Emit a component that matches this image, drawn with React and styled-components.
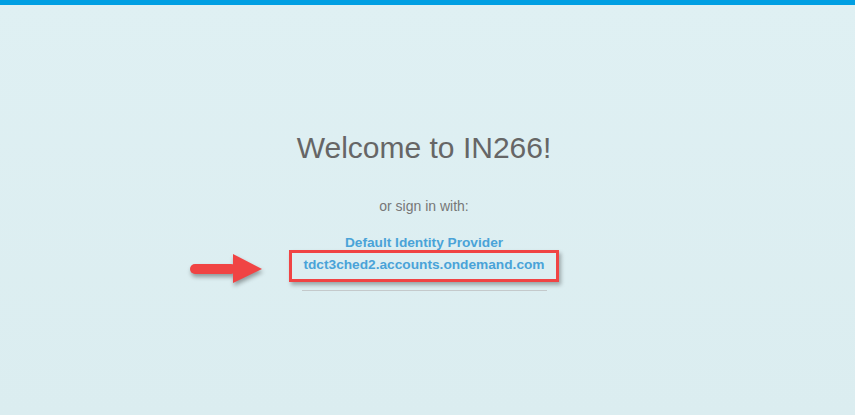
import React from "react";
import styled, { createGlobalStyle } from "styled-components";

const GlobalStyle = createGlobalStyle`
  html, body {
    margin: 0;
    padding: 0;
  }
  body {
    font-family: "Liberation Sans", Arial, sans-serif;
  }
`;

const Page = styled.div`
  min-height: 100vh;
  background: linear-gradient(to bottom, #dff0f3 0%, #dbedf0 100%);
  display: flex;
  flex-direction: column;
`;

const TopBar = styled.div`
  height: 5px;
  background-color: #009fe3;
`;

const Main = styled.main`
  display: flex;
  flex-direction: column;
  align-items: center;
  padding: 128px 7px 0 0;
`;

const Title = styled.h1`
  margin: 0;
  font-size: 30px;
  line-height: 30px;
  font-weight: normal;
  color: #666;
`;

const Subtitle = styled.p`
  margin: 36px 0 0;
  font-size: 14px;
  line-height: 14px;
  color: #777;
`;

const ProviderList = styled.ul`
  list-style: none;
  margin: 23px 0 0;
  padding: 0;
  display: flex;
  flex-direction: column;
  align-items: center;
  gap: 8px;
`;

const ProviderItem = styled.li`
  position: relative;
`;

const ProviderLink = styled.a`
  display: block;
  font-size: 13.7px;
  line-height: 14px;
  font-weight: bold;
  color: #4aa3d8;
  text-decoration: none;
  cursor: pointer;
`;

// red annotation frame drawn over the highlighted provider
const Highlight = styled.span`
  position: absolute;
  left: -14px;
  right: -14px;
  top: -8px;
  bottom: -10px;
  border: 3px solid #f04444;
  box-shadow: 2px 3px 4px rgba(0, 0, 0, 0.3);
  pointer-events: none;
`;

const Pointer = styled.svg`
  position: absolute;
  left: -113px;
  top: -4px;
  width: 72px;
  height: 30px;
  overflow: visible;
  filter: drop-shadow(1px 3px 2px rgba(0, 0, 0, 0.35));
`;

const Divider = styled.hr`
  width: 245px;
  margin: 18px 0 0;
  border: 0;
  border-top: 1px solid #c4c9cb;
`;

const providers = [
  { name: "Default Identity Provider" },
  { name: "tdct3ched2.accounts.ondemand.com", marked: true },
];

const App = () => {
  return (
    <Page>
      <GlobalStyle />
      <TopBar />
      <Main>
        <Title>Welcome to IN266!</Title>
        <Subtitle>or sign in with:</Subtitle>
        <ProviderList>
          {providers.map((p) => (
            <ProviderItem key={p.name}>
              <ProviderLink>{p.name}</ProviderLink>
              {p.marked && (
                <>
                  <Highlight />
                  <Pointer viewBox="0 0 72 30">
                    <rect x="0" y="10" width="46" height="10" rx="5" fill="#f04444" />
                    <polygon points="43,0 72,15 43,29" fill="#f04444" />
                  </Pointer>
                </>
              )}
            </ProviderItem>
          ))}
        </ProviderList>
        <Divider />
      </Main>
    </Page>
  );
};

export default App;
